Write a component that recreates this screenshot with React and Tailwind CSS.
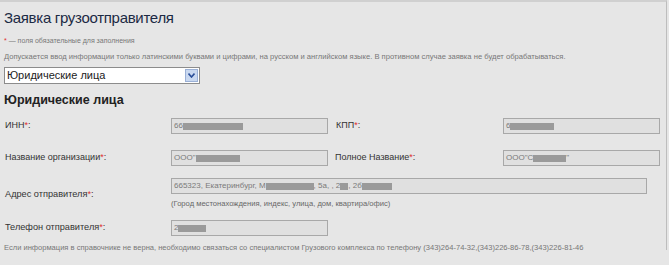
import React from "react";

const Star = () => <span className="text-[#e03030]">*</span>;

function Blur({ w }) {
  return <span className="inline-block h-[7px] bg-[#9a9a9a] align-middle" style={{ width: w }} />;
}

function Field({ children, width = "w-[157px]" }) {
  return (
    <div className={`${width} h-[16px] border border-[#a8a8a8] bg-[#e0e0e0] flex items-center px-[2px] text-[8px] text-[#7a7a7a] overflow-hidden whitespace-nowrap`}>
      {children}
    </div>
  );
}

export default function App() {
  return (
    <div className="w-[669px] h-[265px] bg-[#e6e6e6] font-['Liberation_Sans',Arial,sans-serif] overflow-hidden">
      <div className="w-[667px] h-[250px] border-t-2 border-r border-t-[#d0d0d0] border-r-[#bdbdbd] pl-[4px]">
        <h1 className="pt-[6px] text-[15px] leading-[20px] text-[#1c2a44] tracking-[-0.3px]">Заявка грузоотправителя</h1>

        <p className="mt-[8px] text-[7px] leading-[10px] text-[#777]">
          <Star /> — поля обязательные для заполнения
        </p>
        <p className="mt-[6px] text-[7.6px] leading-[10px] text-[#777]">
          Допускается ввод информации только латинскими буквами и цифрами, на русском и английском языке. В противном случае заявка не будет обрабатываться.
        </p>

        <div className="mt-[5px] w-[196px] h-[17px] border border-[#8c8c8c] bg-white flex items-center justify-between pl-[2px] pr-[1px]">
          <span className="text-[11px] text-[#222]">Юридические лица</span>
          <span className="w-[13px] h-[13px] bg-[#c9d8f0] border border-[#9ab0d6] flex items-center justify-center">
            <svg width="7" height="5" viewBox="0 0 7 5"><path d="M0.5 0.5L3.5 4L6.5 0.5" fill="none" stroke="#2b4f9a" strokeWidth="1.6" /></svg>
          </span>
        </div>

        <h2 className="mt-[8px] text-[12.5px] leading-[17px] font-bold text-[#222]">Юридические лица</h2>

        <div className="mt-[9px] flex items-center">
          <div className="w-[167px] text-[9px] text-[#333] pl-[1px]">ИНН<Star />:</div>
          <Field>66<Blur w={60} /></Field>
          <div className="w-[175px] pl-[8px] text-[9px] text-[#333]">КПП<Star />:</div>
          <Field>6<Blur w={44} /></Field>
        </div>

        <div className="mt-[16px] flex items-center">
          <div className="w-[167px] text-[9px] text-[#333] pl-[1px]">Название организации<Star />:</div>
          <Field>ООО"<Blur w={44} /></Field>
          <div className="w-[175px] pl-[7px] text-[9px] text-[#333]">Полное Название<Star />:</div>
          <Field>ООО"С<Blur w={33} />"</Field>
        </div>

        <div className="mt-[12px] flex">
          <div className="w-[167px] pt-[10px] text-[9.2px] text-[#333] pl-[1px]">Адрес отправителя<Star />:</div>
          <div>
            <Field width="w-[476px]">
              665323, Екатеринбург, М<Blur w={48} />, 5а, , 2<Blur w={8} />, 2б<Blur w={30} />
            </Field>
            <p className="mt-[5px] text-[7.6px] leading-[10px] text-[#666]">(Город местонахождения, индекс, улица, дом, квартира/офис)</p>
          </div>
        </div>

        <div className="mt-[11px] flex items-center">
          <div className="w-[167px] text-[9.2px] text-[#333] pl-[1px]">Телефон отправителя<Star />:</div>
          <Field>2<Blur w={28} /></Field>
        </div>

        <p className="mt-[7px] text-[7.55px] leading-[10px] text-[#777]">
          Если информация в справочнике не верна, необходимо связаться со специалистом Грузового комплекса по телефону (343)264-74-32,(343)226-86-78,(343)226-81-46
        </p>
      </div>
    </div>
  );
}
